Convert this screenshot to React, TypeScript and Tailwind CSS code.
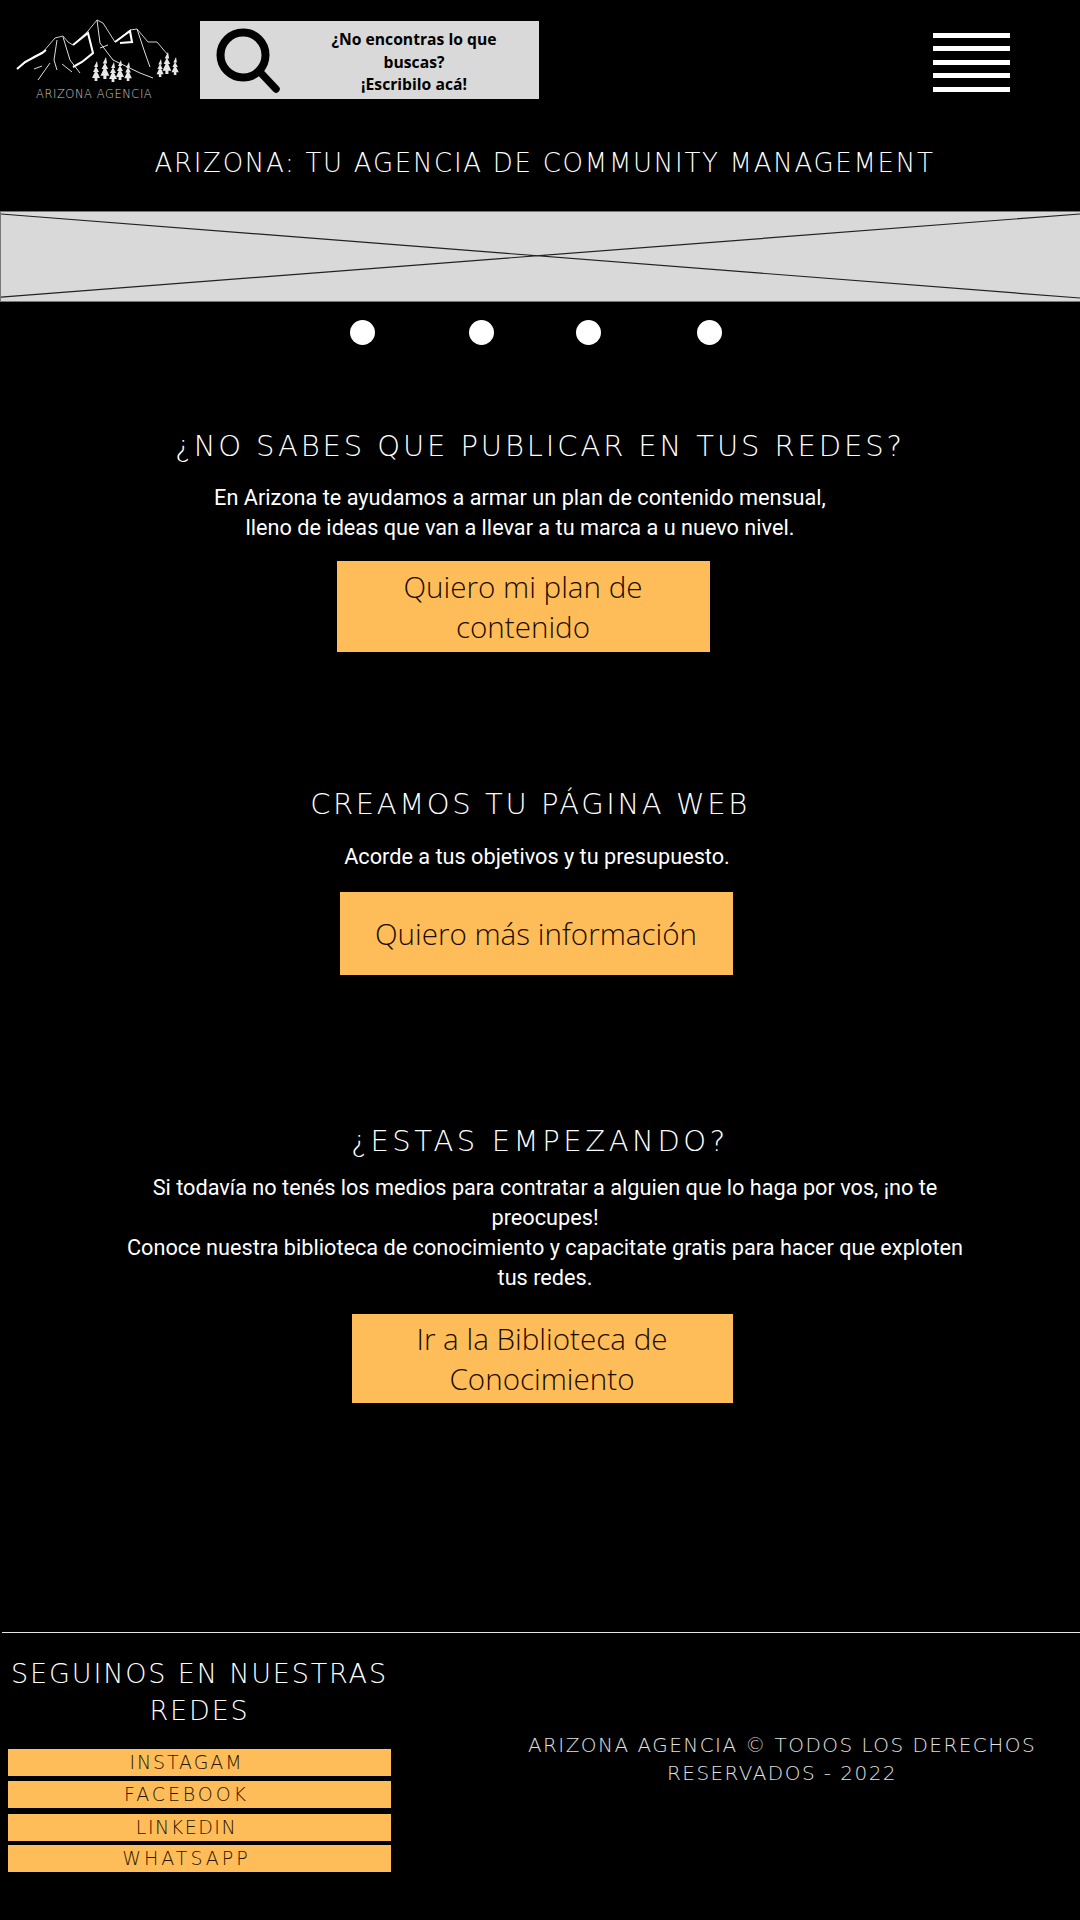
const thin = 'font-["DejaVu_Sans",sans-serif] font-extralight uppercase'

function Logo() {
  const tree = (x: number, y: number, s: number) => (
    <path
      key={`${x}-${y}`}
      d={`M${x} ${y}l${-3 * s} ${6 * s}h${1.6 * s}l${-2.6 * s} ${5 * s}h${1.8 * s}l${-2.8 * s} ${6 * s}h${2.6 * s}v${3 * s}h${2.8 * s}v${-3 * s}h${2.6 * s}l${-2.8 * s} ${-6 * s}h${1.8 * s}l${-2.6 * s} ${-5 * s}h${1.6 * s}z`}
      fill="#e8e8e8"
    />
  )
  return (
    <div className="relative h-[105px] w-[190px] shrink-0">
      <svg width="190" height="84" viewBox="0 0 190 84" fill="none">
        {/* outline */}
        <path d="M17 69l16-12 10-5 12-14 8-2 5 6 5 3 15-14 9-11 6 3 12 19 15-12 7-1 11 13 9 0 11 13" stroke="#ccc" strokeWidth="1" />
        {/* lit ridges */}
        <path d="M17 69l8-7 17-9 4-3M73 45l15-12 5 20-11 9-9 5M115 42l15-11 2 11-12 1" stroke="#fff" strokeWidth="2.1" />
        <path d="M97 20l3 23 13 17 27 13 13 5M137 29l8 24 5 14M63 37l7 23 10 13M50 63l-12 17M57 40l-3 20 3 10M42 66l-8 3M62 64l10 8M108 45l-8 3" stroke="#ddd" strokeWidth="1" />
        {[
          [97, 61, 1],
          [106, 57, 1.1],
          [114, 62, 1],
          [121, 60, 1],
          [129, 62, 0.95],
          [161, 59, 0.9],
          [168, 52, 1.1],
          [176, 57, 0.9],
        ].map(([x, y, s]) => tree(x, y, s))}
      </svg>
      <div className='absolute left-[36px] top-[87px] font-["DejaVu_Sans",sans-serif] text-[11.5px] leading-[14px] font-extralight tracking-[0.55px] whitespace-nowrap text-[#c8c8c8]'>
        ARIZONA AGENCIA
      </div>
    </div>
  )
}

function Cta({ children, className }: { children: React.ReactNode; className: string }) {
  return (
    <a
      className={`flex items-center justify-center bg-[#ffbd59] px-6 text-center font-["Open_Sans",sans-serif] text-[29.6px] leading-[40px] font-light text-[#1a0d00] ${className}`}
    >
      {children}
    </a>
  )
}

const socials = [
  { label: 'INSTAGAM', cls: 'mb-[5px] tracking-[1.9px]' },
  { label: 'FACEBOOK', cls: 'mb-[6px] tracking-[2.9px]' },
  { label: 'LINKEDIN', cls: 'mb-[4px] tracking-[1.5px]' },
  { label: 'WHATSAPP', cls: 'tracking-[3px]' },
]

export default function App() {
  return (
    <div className='h-[1920px] w-[1080px] overflow-hidden bg-black font-["Roboto",sans-serif] text-white'>
      <header className="flex h-[105px] items-start">
        <Logo />
        <div className="mt-[21px] ml-[10px] flex h-[78px] w-[339px] items-center bg-[#d9d9d9] pr-[15px] pl-[15px] text-black">
          <svg width="66" height="66" viewBox="0 0 66 66" fill="none" className="shrink-0">
            <circle cx="28" cy="28" r="22.5" stroke="#000" strokeWidth="8" />
            <path d="M45 45l16 17" stroke="#000" strokeWidth="7.5" strokeLinecap="round" />
          </svg>
          <p className='ml-[23px] flex-1 pt-[4px] text-center font-["Open_Sans",sans-serif] text-[15.7px] leading-[22.5px] font-bold'>
            ¿No encontras lo que buscas?
            <br />
            ¡Escribilo acá!
          </p>
        </div>
        <div className="mt-[33px] ml-[394px] flex w-[77px] flex-col gap-[8.4px]">
          <span className="h-[5px] bg-white" />
          <span className="h-[5px] bg-white" />
          <span className="h-[5px] bg-white" />
          <span className="h-[5px] bg-white" />
          <span className="h-[5px] bg-white" />
        </div>
      </header>

      <h1 className={`${thin} mt-[43px] pl-[9px] text-center text-[26px] leading-[30px] tracking-[1.72px]`}>
        Arizona: tu agencia de community management
      </h1>

      <div className="mt-[33px] h-[91px] w-full border-y border-l border-[#777] bg-[#d9d9d9]">
        <svg className="block h-full w-full" viewBox="0 0 1080 90" preserveAspectRatio="none">
          <path d="M0 2L1080 87M0 86L1080 2" stroke="#222" strokeWidth="1.2" />
        </svg>
      </div>

      <div className="mt-[18px] flex pl-[350px]">
        <span className="size-[25px] rounded-full bg-white" />
        <span className="ml-[94px] size-[25px] rounded-full bg-white" />
        <span className="ml-[82px] size-[25px] rounded-full bg-white" />
        <span className="ml-[96px] size-[25px] rounded-full bg-white" />
      </div>

      <section className="mt-[84px] flex flex-col items-center">
        <h2 className={`${thin} text-center text-[29px] leading-[34px] tracking-[2.9px]`}>
          ¿No sabes que publicar en tus redes?
        </h2>
        <p className="mt-[20px] ml-[-40px] text-center text-[21.7px] leading-[30px]">
          En Arizona te ayudamos a armar un plan de contenido mensual,
          <br />
          lleno de ideas que van a llevar a tu marca a u nuevo nivel.
        </p>
        <Cta className="mt-[18px] ml-[-34px] h-[91px] w-[373px]">Quiero mi plan de contenido</Cta>
      </section>

      <section className="mt-[135px] flex flex-col items-center">
        <h2 className={`${thin} ml-[-20px] text-center text-[29px] leading-[34px] tracking-[2.6px]`}>
          Creamos tu página web
        </h2>
        <p className="mt-[21px] ml-[-6px] text-center text-[21.7px] leading-[30px]">
          Acorde a tus objetivos y tu presupuesto.
        </p>
        <Cta className="mt-[20px] ml-[-8px] h-[83px] w-[393px]">Quiero más información</Cta>
      </section>

      <section className="mt-[149px] flex flex-col items-center">
        <h2 className={`${thin} text-center text-[29px] leading-[34px] tracking-[3.6px]`}>
          ¿Estas empezando?
        </h2>
        <p className="mt-[15px] ml-[10px] w-[850px] text-center text-[21.7px] leading-[30px]">
          Si todavía no tenés los medios para contratar a alguien que lo haga por vos, ¡no te preocupes!
          <br />
          Conoce nuestra biblioteca de conocimiento y capacitate gratis para hacer que exploten tus redes.
        </p>
        <Cta className="mt-[21px] ml-[4px] h-[89px] w-[381px]">Ir a la Biblioteca de Conocimiento</Cta>
      </section>

      <footer className="mt-[229px] ml-[2px] border-t border-t-[#e6e6e6]">
        <div className="flex items-start">
          <div className="ml-[6px] w-[383px]">
            <h3 className={`${thin} mt-[22px] text-center text-[27px] leading-[37px] tracking-[1.85px]`}>
              Seguinos en nuestras redes
            </h3>
            <ul className="mt-[20px]">
              {socials.map(s => (
                <li
                  key={s.label}
                  className={`h-[27px] bg-[#ffbd59] pr-[26px] text-center font-["DejaVu_Sans",sans-serif] text-[19px] leading-[26px] font-extralight text-[#2a1700] ${s.cls}`}
                >
                  {s.label}
                </li>
              ))}
            </ul>
          </div>
          <p className={`${thin} mt-[98px] ml-[126px] w-[530px] text-center text-[20px] leading-[28px] tracking-[1.45px] text-[#e0e0e0]`}>
            Arizona Agencia © todos los derechos reservados - 2022
          </p>
        </div>
      </footer>
    </div>
  )
}
